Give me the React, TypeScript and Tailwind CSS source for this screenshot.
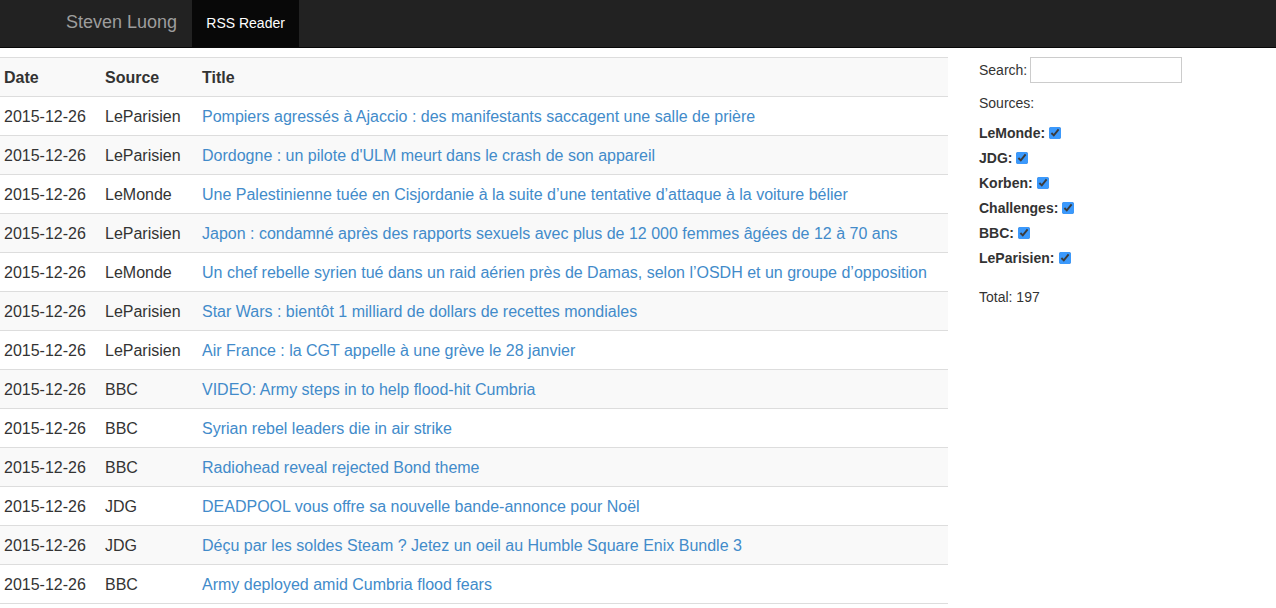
import React from "react";

type Item = { date: string; source: string; title: string };

const items: Item[] = [
  { date: "2015-12-26", source: "LeParisien", title: "Pompiers agressés à Ajaccio : des manifestants saccagent une salle de prière" },
  { date: "2015-12-26", source: "LeParisien", title: "Dordogne : un pilote d'ULM meurt dans le crash de son appareil" },
  { date: "2015-12-26", source: "LeMonde", title: "Une Palestinienne tuée en Cisjordanie à la suite d’une tentative d’attaque à la voiture bélier" },
  { date: "2015-12-26", source: "LeParisien", title: "Japon : condamné après des rapports sexuels avec plus de 12 000 femmes âgées de 12 à 70 ans" },
  { date: "2015-12-26", source: "LeMonde", title: "Un chef rebelle syrien tué dans un raid aérien près de Damas, selon l’OSDH et un groupe d’opposition" },
  { date: "2015-12-26", source: "LeParisien", title: "Star Wars : bientôt 1 milliard de dollars de recettes mondiales" },
  { date: "2015-12-26", source: "LeParisien", title: "Air France : la CGT appelle à une grève le 28 janvier" },
  { date: "2015-12-26", source: "BBC", title: "VIDEO: Army steps in to help flood-hit Cumbria" },
  { date: "2015-12-26", source: "BBC", title: "Syrian rebel leaders die in air strike" },
  { date: "2015-12-26", source: "BBC", title: "Radiohead reveal rejected Bond theme" },
  { date: "2015-12-26", source: "JDG", title: "DEADPOOL vous offre sa nouvelle bande-annonce pour Noël" },
  { date: "2015-12-26", source: "JDG", title: "Déçu par les soldes Steam ? Jetez un oeil au Humble Square Enix Bundle 3" },
  { date: "2015-12-26", source: "BBC", title: "Army deployed amid Cumbria flood fears" },
];

const sources = ["LeMonde", "JDG", "Korben", "Challenges", "BBC", "LeParisien"];

const App = () => {
  return (
    <div className="h-[608px] overflow-hidden bg-white text-[#333] font-['Liberation_Sans',Arial,sans-serif]">
      {/* navbar */}
      <div className="h-[48px] bg-[#222] border-b border-[#080808] flex">
        <div className="pl-[66px] pr-[15px] pb-[2px] flex items-center text-[18px] text-[#9d9d9d]">Steven Luong</div>
        <div className="w-[107px] bg-[#080808] flex items-center justify-center pb-[1px] text-[14px] text-white">
          RSS Reader
        </div>
      </div>

      <div className="flex pt-[9px]">
        <div className="w-[948px] shrink-0">
          <table className="w-full border-collapse text-[16px]">
            <tbody>
              <tr className="bg-[#f9f9f9] border-t border-[#ddd]">
                <th className="w-[101px] text-left font-bold h-[39px] px-[4px] pt-[1px]">Date</th>
                <th className="w-[97px] text-left font-bold px-[4px] pt-[1px]">Source</th>
                <th className="text-left font-bold px-[4px] pt-[1px]">Title</th>
              </tr>
              {items.map((it, i) => (
                <tr key={i} className={`border-y border-[#ddd] ${i % 2 === 1 ? "bg-[#f9f9f9]" : ""}`}>
                  <td className="h-[39px] px-[4px] pt-[2px] whitespace-nowrap">{it.date}</td>
                  <td className="px-[4px] pt-[2px] whitespace-nowrap">{it.source}</td>
                  <td className="px-[4px] pt-[2px] whitespace-nowrap">
                    <a className="text-[#428bca]" href="#">{it.title}</a>
                  </td>
                </tr>
              ))}
            </tbody>
          </table>
        </div>

        <div className="pl-[31px] text-[14px] flex flex-col">
          <div className="flex items-center gap-[3px]">
            <span>Search:</span>
            <input type="text" className="w-[152px] h-[26px] border border-[#ccc] outline-none" />
          </div>
          <div className="mt-[10px]">Sources:</div>
          <div className="mt-[10px] flex flex-col gap-[7px]">
            {sources.map((s) => (
              <label key={s} className="flex items-center gap-[4px] text-[14px] font-bold h-[18px]">
                {s}:
                <input type="checkbox" defaultChecked className="w-[12px] h-[12px] accent-[#3b99fc]" />
              </label>
            ))}
          </div>
          <div className="mt-[20px]">Total: 197</div>
        </div>
      </div>
    </div>
  );
};

export default App;
